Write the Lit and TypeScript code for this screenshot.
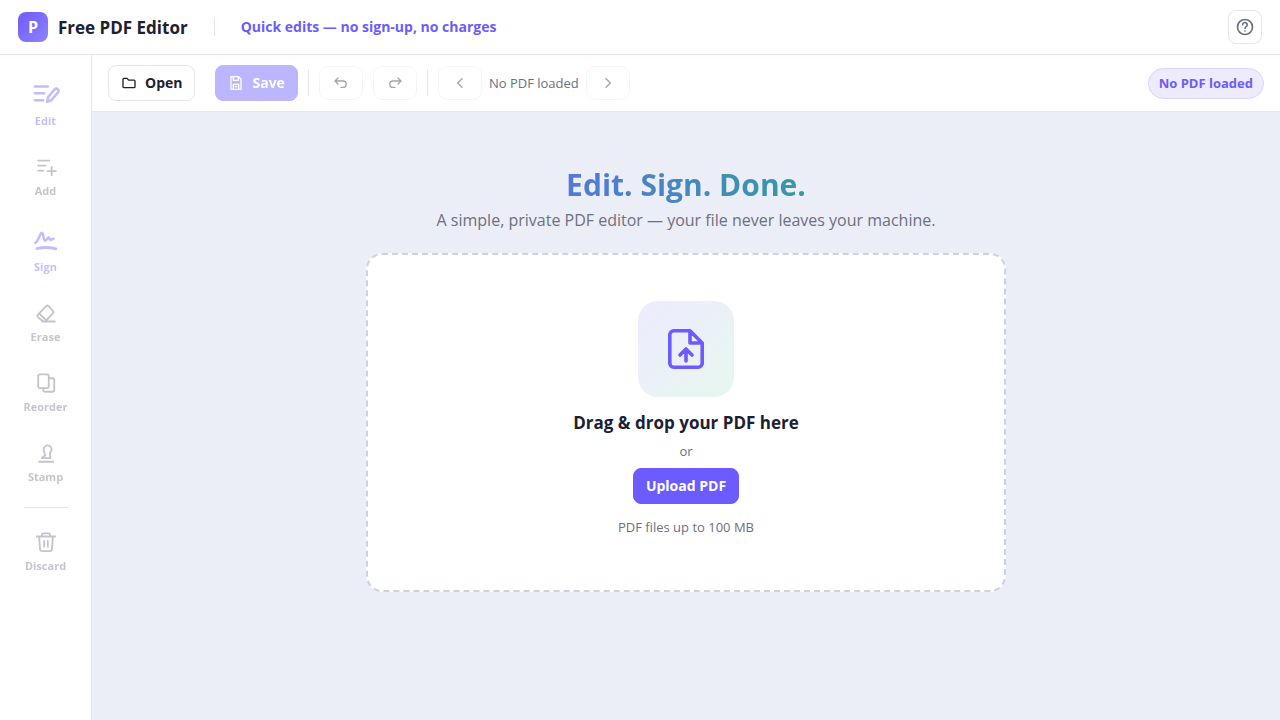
import { LitElement, html, svg, css, type TemplateResult } from "lit";
import { customElement } from "lit/decorators.js";
import { classMap } from "lit/directives/class-map.js";

interface Tool {
  label: string;
  icon: TemplateResult;
  primary?: boolean;
}

const tools: Tool[] = [
  {
    label: "Edit",
    primary: true,
    icon: svg`<path d="M2.500 5.600H13.500M2.500 11.400h8M2.500 17.300h7" stroke-width="2.200"/><path d="M13 18.700l.8-4 5.600-6.600a1.900 1.900 0 0 1 2.900 2.500l-5.700 6.700z" stroke-width="2.200"/>`,
  },
  {
    label: "Add",
    icon: svg`<path d="M3.500 5h12M3.500 10.500h8M3.500 16h5.500M18.200 12v9M13.700 16.500h9"/>`,
  },
  {
    label: "Sign",
    primary: true,
    icon: svg`<path d="M2.800 14.600c2-.6 4-7.700 5.500-8.700 1.800-.3 1.300 6.700 2.900 6.700 1.300 0 2.100-3 3.100-2.700.8.3.7 2 1.600 2 .9-.1 1.500-.9 2.600-1" stroke-width="2.200"/><path d="M4.200 19.400c5-1.300 11-1.200 16.300.2" stroke-width="2.400"/>`,
  },
  {
    label: "Erase",
    icon: svg`<path d="M8.600 21 2.900 16.300a1.500 1.500 0 0 1 0-2.100L12.500 4.300a1.500 1.500 0 0 1 2.100 0l5.100 5.700a1.500 1.500 0 0 1 0 2.100L11.400 21M4.700 12.800l7.800 7.400M7.700 21.300h14"/>`,
  },
  {
    label: "Reorder",
    icon: svg`<rect x="3.500" y="2.500" width="11.500" height="15" rx="2"/><path d="M15.500 6.800H19a2 2 0 0 1 2 2V19.500a2 2 0 0 1-2 2h-8a2 2 0 0 1-2-2v-1.700"/>`,
  },
  {
    label: "Stamp",
    icon: svg`<path d="M4.500 21.500h15.500M7.500 17.500h9.500M8 17.300c.2-1.800 1.300-1.700 2.700-1.900.9-.4.3-2.300-.4-3.800a5 5 0 0 1-.8-3.600 4.300 4.300 0 0 1 8.600 0c0 1.800-1.300 2.700-1.800 4.400-.4 1.500.4 2.600.4 5.100"/>`,
  },
];

const trash = svg`<path d="M2 6h20M7.500 5.800V4a1.500 1.500 0 0 1 1.500-1.500h6A1.500 1.500 0 0 1 16.500 4v1.800M4.500 6.200l1 14a2 2 0 0 0 2 1.800h9a2 2 0 0 0 2-1.800L19.500 6.200M10 10.800v6.500M14 10.800v6.500"/>`;

@customElement("app-root")
export class AppRoot extends LitElement {
  static styles = css`
    :host {
      --accent: #6c5cff;
      --ink: #1c2033;
      --muted: #6b7082;
      --line: #e4e5f0;
      display: flex;
      flex-direction: column;
      min-height: 100vh;
      box-sizing: border-box;
      color: var(--ink);
      background: #fff;
      font: 14px/20px "Open Sans", "Noto Sans", sans-serif;
    }
    *, *::before, *::after { box-sizing: border-box; }
    button { font: inherit; color: inherit; margin: 0; padding: 0; cursor: pointer; }
    button:disabled { cursor: default; }
    h1, h2, p { margin: 0; }
    svg {
      display: block;
      fill: none;
      stroke: currentColor;
      stroke-width: 2;
      stroke-linecap: round;
      stroke-linejoin: round;
    }
    .header {
      display: flex;
      align-items: center;
      gap: 10px;
      height: 55px;
      padding: 0 18px;
      border-bottom: 1px solid var(--line);
    }
    .logo {
      display: grid;
      place-items: center;
      width: 30px;
      height: 30px;
      border-radius: 8px;
      color: #fff;
      font-weight: 700;
      font-size: 16px;
      background: linear-gradient(135deg, #6c5cff, #8f82ff);
    }
    .brand { font-size: 17px; line-height: 25px; font-weight: 700; }
    .rule { width: 1px; height: 18px; margin: 0 16px; background: var(--line); }
    .tagline { color: var(--accent); font-size: 14px; font-weight: 700; }
    .help {
      display: grid;
      place-items: center;
      width: 34px;
      height: 34px;
      margin-left: auto;
      border: 1px solid var(--line);
      border-radius: 8px;
      background: #fff;
      color: var(--muted);
    }
    .body { display: flex; flex: 1; }
    .rail {
      display: flex;
      flex-direction: column;
      align-items: center;
      gap: 7px;
      width: 92px;
      padding: 15px 0;
      border-right: 1px solid var(--line);
    }
    .tool {
      display: flex;
      flex-direction: column;
      align-items: center;
      gap: 4px;
      width: 76px;
      padding: 10px 0;
      border: 0;
      border-radius: 10px;
      background: none;
      color: var(--muted);
      font-size: 11px;
      line-height: 17px;
      font-weight: 700;
    }
    .tool:disabled { opacity: 0.4; }
    .tool.primary { color: var(--accent); }
    .split { width: 44px; height: 1px; margin: 5px 0 6px; background: var(--line); }
    .main { display: flex; flex: 1; flex-direction: column; min-width: 0; }
    .toolbar {
      display: flex;
      align-items: center;
      gap: 10px;
      height: 57px;
      padding: 0 16px;
      border-bottom: 1px solid var(--line);
    }
    .btn {
      display: flex;
      align-items: center;
      gap: 8px;
      height: 36px;
      padding: 0 12px;
      border: 1px solid var(--line);
      border-radius: 8px;
      background: #fff;
      font-size: 14px;
      font-weight: 700;
    }
    .open { margin-right: 10px; }
    .solid { border-color: var(--accent); background: var(--accent); color: #fff; }
    .save:disabled { opacity: 0.45; }
    .bar { width: 1px; height: 26px; background: var(--line); }
    .icon-btn {
      display: grid;
      place-items: center;
      width: 44px;
      height: 34px;
      border: 1px solid var(--line);
      border-radius: 9px;
      background: #fff;
      color: var(--ink);
    }
    .icon-btn:disabled { opacity: 0.4; }
    .pager { display: flex; align-items: center; gap: 7px; color: var(--muted); font-size: 13px; }
    .pill {
      margin-left: auto;
      padding: 5px 10px;
      border: 1px solid #d9d4ff;
      border-radius: 16px;
      background: #eeebff;
      color: var(--accent);
      font-size: 13px;
      line-height: 19px;
      font-weight: 700;
    }
    .canvas {
      display: flex;
      flex: 1;
      flex-direction: column;
      align-items: center;
      padding: 49px 24px;
      background: #ebeef6;
    }
    .hero { width: 100%; max-width: 640px; text-align: center; }
    .headline {
      font-size: 30px;
      line-height: 48px;
      font-weight: 700;
      color: transparent;
      background: linear-gradient(90deg, #6c5cff, #1fb57a);
      background-clip: text;
      -webkit-background-clip: text;
    }
    .sub { color: var(--muted); font-size: 16px; line-height: 22px; }
    .drop {
      display: flex;
      flex-direction: column;
      align-items: center;
      margin-top: 22px;
      padding: 46px 24px 53px;
      border: 2px dashed #cdd1e4;
      border-radius: 16px;
      background: #fff;
    }
    .tile {
      display: grid;
      place-items: center;
      width: 96px;
      height: 96px;
      border-radius: 20px;
      color: var(--accent);
      background: linear-gradient(135deg, #eeebff, #e6f7ee);
    }
    .drop-title { margin-top: 14px; font-size: 17px; line-height: 24px; font-weight: 700; }
    .or { margin: 6px 0 7px; color: var(--muted); font-size: 13px; }
    .hint { margin-top: 13px; color: var(--muted); font-size: 13px; line-height: 20px; }
  `;

  private renderTool(tool: Tool) {
    const size = tool.primary ? 28 : 22;
    return html`<button class=${classMap({ tool: true, primary: !!tool.primary })} disabled>
      <svg width=${size} height=${size} viewBox="0 0 24 24" aria-hidden="true">${tool.icon}</svg>
      <span>${tool.label}</span>
    </button>`;
  }

  render() {
    return html`
      <header class="header">
        <div class="logo" aria-hidden="true">P</div>
        <div class="brand">Free PDF Editor</div>
        <div class="rule"></div>
        <div class="tagline">Quick edits — no sign-up, no charges</div>
        <button class="help" aria-label="Help">
          <svg width="20" height="20" viewBox="0 0 24 24"><circle cx="12" cy="12" r="9"/><path d="M9.200 9.300a2.700 2.700 0 1 1 4.200 2.300c-.9.6-1.400 1-1.400 2.200M12 16.800v.1"/></svg>
        </button>
      </header>
      <div class="body">
        <nav class="rail" aria-label="Tools">
          ${tools.map((t) => this.renderTool(t))}
          <div class="split"></div>
          ${this.renderTool({ label: "Discard", icon: trash })}
        </nav>
        <main class="main">
          <div class="toolbar">
            <button class="btn open">
              <svg width="16" height="16" viewBox="0 0 24 24"><path d="M3 6.500A1.500 1.500 0 0 1 4.500 5H9l2.500 2.700h8A1.500 1.500 0 0 1 21 9.200v8.300a1.500 1.500 0 0 1-1.500 1.500h-15A1.500 1.500 0 0 1 3 17.500z"/></svg>
              Open
            </button>
            <button class="btn solid save" disabled>
              <svg width="16" height="16" viewBox="0 0 24 24"><path d="M4.500 2.500h11L19.500 6v15.500h-15zM8 3v5h7.500V4M8 21v-7h8v7M11 17.500h2"/></svg>
              Save
            </button>
            <div class="bar"></div>
            <button class="icon-btn" aria-label="Undo" disabled>
              <svg width="16" height="16" viewBox="0 0 24 24"><path d="M7.500 4.500 3 9l4.500 4.500M3.500 9H15a4.800 4.800 0 0 1 0 9.600h-3"/></svg>
            </button>
            <button class="icon-btn" aria-label="Redo" disabled>
              <svg width="16" height="16" viewBox="0 0 24 24"><path d="M16.500 4.500 21 9l-4.500 4.500M20.500 9H9a4.800 4.800 0 0 0 0 9.600h3"/></svg>
            </button>
            <div class="bar"></div>
            <div class="pager">
              <button class="icon-btn" aria-label="Previous page" disabled>
                <svg width="16" height="16" viewBox="0 0 24 24"><path d="M15 5.500 8.500 12l6.500 6.500"/></svg>
              </button>
              <span>No PDF loaded</span>
              <button class="icon-btn" aria-label="Next page" disabled>
                <svg width="16" height="16" viewBox="0 0 24 24"><path d="m9 5.500 6.500 6.500L9 18.500"/></svg>
              </button>
            </div>
            <div class="pill">No PDF loaded</div>
          </div>
          <section class="canvas">
            <div class="hero">
              <h1 class="headline">Edit. Sign. Done.</h1>
              <p class="sub">A simple, private PDF editor — your file never leaves your machine.</p>
              <div class="drop">
                <div class="tile">
                  <svg width="48" height="48" viewBox="0 0 24 24" aria-hidden="true"><path stroke-width="1.800" d="M14 2.900H5.900A2 2 0 0 0 3.900 4.900v14.200a2 2 0 0 0 2 2h12.200a2 2 0 0 0 2-2V9zM14 2.900V9h6.100M12 18v-5.500M9 15l3-3 3 3"/></svg>
                </div>
                <h2 class="drop-title">Drag &amp; drop your PDF here</h2>
                <p class="or">or</p>
                <button class="btn solid">Upload PDF</button>
                <p class="hint">PDF files up to 100 MB</p>
              </div>
            </div>
          </section>
        </main>
      </div>
    `;
  }
}
